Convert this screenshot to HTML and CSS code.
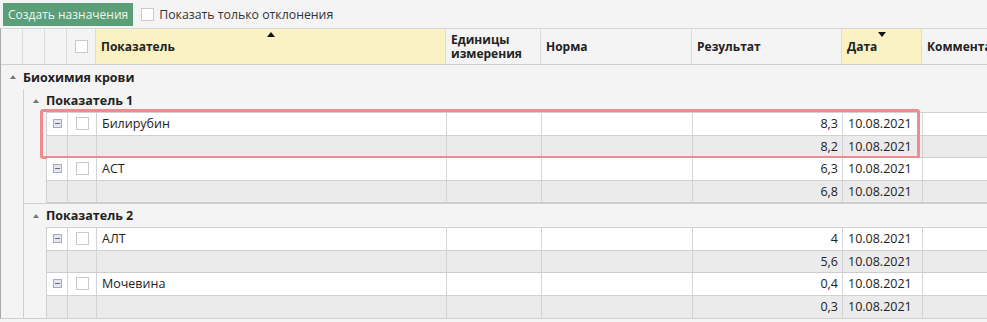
FILE: index.html
```html
<!DOCTYPE html>
<html lang="ru">
<head>
    <meta charset="UTF-8">
    <meta name="viewport" content="width=device-width, initial-scale=1.0">
    <title>Результаты анализов</title>
    <link rel="stylesheet" href="styles.css">
</head>
<body>
    <div class="toolbar">
        <button class="btn-create">Создать назначения</button>
        <label class="filter"><span class="check"></span>Показать только отклонения</label>
    </div>

    <div class="grid">
        <div class="grid-head">
            <div class="hcell c-ind"></div>
            <div class="hcell c-ind"></div>
            <div class="hcell c-ind"></div>
            <div class="hcell c-chk"><span class="check"></span></div>
            <div class="hcell c-name sorted">Показатель<span class="sort up"></span></div>
            <div class="hcell c-unit">Единицы<br>измерения</div>
            <div class="hcell c-norm">Норма</div>
            <div class="hcell c-res">Результат</div>
            <div class="hcell c-date sorted">Дата<span class="sort down"></span></div>
            <div class="hcell c-comm">Комментарий</div>
        </div>

        <div class="group">
            <div class="group-row top"><span class="caret"></span>Биохимия крови</div>
            <div class="group-body">

                <div class="group sub">
                    <div class="group-row"><span class="caret"></span>Показатель 1</div>
                    <div class="group-body">
                        <div class="pair highlight">
                            <div class="row">
                                <div class="cell c-exp"><span class="minus"></span></div>
                                <div class="cell c-chk"><span class="check"></span></div>
                                <div class="cell c-name">Билирубин</div>
                                <div class="cell c-unit"></div>
                                <div class="cell c-norm"></div>
                                <div class="cell c-res">8,3</div>
                                <div class="cell c-date">10.08.2021</div>
                                <div class="cell c-comm"></div>
                            </div>
                            <div class="row prev">
                                <div class="cell c-exp"></div>
                                <div class="cell c-chk"></div>
                                <div class="cell c-name"></div>
                                <div class="cell c-unit"></div>
                                <div class="cell c-norm"></div>
                                <div class="cell c-res">8,2</div>
                                <div class="cell c-date">10.08.2021</div>
                                <div class="cell c-comm"></div>
                            </div>
                        </div>
                        <div class="pair">
                            <div class="row">
                                <div class="cell c-exp"><span class="minus"></span></div>
                                <div class="cell c-chk"><span class="check"></span></div>
                                <div class="cell c-name">АСТ</div>
                                <div class="cell c-unit"></div>
                                <div class="cell c-norm"></div>
                                <div class="cell c-res">6,3</div>
                                <div class="cell c-date">10.08.2021</div>
                                <div class="cell c-comm"></div>
                            </div>
                            <div class="row prev">
                                <div class="cell c-exp"></div>
                                <div class="cell c-chk"></div>
                                <div class="cell c-name"></div>
                                <div class="cell c-unit"></div>
                                <div class="cell c-norm"></div>
                                <div class="cell c-res">6,8</div>
                                <div class="cell c-date">10.08.2021</div>
                                <div class="cell c-comm"></div>
                            </div>
                        </div>
                    </div>
                </div>

                <div class="group sub">
                    <div class="group-row"><span class="caret"></span>Показатель 2</div>
                    <div class="group-body">
                        <div class="pair">
                            <div class="row">
                                <div class="cell c-exp"><span class="minus"></span></div>
                                <div class="cell c-chk"><span class="check"></span></div>
                                <div class="cell c-name">АЛТ</div>
                                <div class="cell c-unit"></div>
                                <div class="cell c-norm"></div>
                                <div class="cell c-res">4</div>
                                <div class="cell c-date">10.08.2021</div>
                                <div class="cell c-comm"></div>
                            </div>
                            <div class="row prev">
                                <div class="cell c-exp"></div>
                                <div class="cell c-chk"></div>
                                <div class="cell c-name"></div>
                                <div class="cell c-unit"></div>
                                <div class="cell c-norm"></div>
                                <div class="cell c-res">5,6</div>
                                <div class="cell c-date">10.08.2021</div>
                                <div class="cell c-comm"></div>
                            </div>
                        </div>
                        <div class="pair">
                            <div class="row">
                                <div class="cell c-exp"><span class="minus"></span></div>
                                <div class="cell c-chk"><span class="check"></span></div>
                                <div class="cell c-name">Мочевина</div>
                                <div class="cell c-unit"></div>
                                <div class="cell c-norm"></div>
                                <div class="cell c-res">0,4</div>
                                <div class="cell c-date">10.08.2021</div>
                                <div class="cell c-comm"></div>
                            </div>
                            <div class="row prev">
                                <div class="cell c-exp"></div>
                                <div class="cell c-chk"></div>
                                <div class="cell c-name"></div>
                                <div class="cell c-unit"></div>
                                <div class="cell c-norm"></div>
                                <div class="cell c-res">0,3</div>
                                <div class="cell c-date">10.08.2021</div>
                                <div class="cell c-comm"></div>
                            </div>
                        </div>
                    </div>
                </div>

            </div>
        </div>
    </div>
</body>
</html>
```

FILE: styles.css
```css
body {
    margin: 0;
    width: 987px;
    height: 322px;
    overflow: hidden;
    font-family: "Open Sans", "Noto Sans", sans-serif;
    font-size: 12px;
    color: #222;
    background-color: #f4f4f4;
}
.toolbar {
    display: flex;
    align-items: center;
    gap: 8px;
    height: 28px;
    padding-left: 3px;
    box-sizing: border-box;
}
.btn-create {
    height: 23px;
    padding: 0 5px;
    font-family: inherit;
    font-size: 12px;
    color: #eef7f1;
    background-color: #5c9e78;
    border: none;
    border-radius: 0;
}
.filter {
    display: flex;
    align-items: center;
    gap: 5px;
    font-size: 12.3px;
    color: #333;
}
.check {
    display: inline-block;
    width: 11px;
    height: 11px;
    background-color: #fff;
    border: 1px solid #c9c9c9;
}

/* grid */
.grid {
    width: 1080px;
    border-top: 1px solid #d6d6d6;
    border-left: 1px solid #a9a9a9;
    border-bottom: 1px solid #d0d0d0;
}
.grid-head {
    display: flex;
    height: 36px;
    border-bottom: 1px solid #d0d0d0;
    box-sizing: border-box;
    font-weight: bold;
}
.hcell {
    position: relative;
    display: flex;
    align-items: center;
    padding-left: 5px;
    box-sizing: border-box;
    border-right: 1px solid #dcdcdc;
    line-height: 14px;
}
.hcell.c-ind {
    width: 22px;
    padding: 0;
}
.hcell.c-chk {
    justify-content: center;
    padding: 0;
}
.hcell.sorted {
    background-color: #fbf2c4;
}
.sort {
    position: absolute;
    top: 3px;
    left: 50%;
    margin-left: -4px;
    width: 0;
    height: 0;
    border-left: 4px solid transparent;
    border-right: 4px solid transparent;
}
.sort.up {
    border-bottom: 5px solid #111;
}
.sort.down {
    border-top: 5px solid #111;
}

.c-exp { width: 21px; }
.c-chk { width: 29px; }
.c-name { width: 350px; }
.c-unit { width: 95px; }
.c-norm { width: 151px; }
.c-res { width: 150px; }
.c-date { width: 80px; }
.c-comm { flex: 1; }

.group-row {
    display: flex;
    align-items: center;
    height: 23px;
    font-weight: bold;
    font-size: 12.5px;
}
.group-row.top {
    height: 24px;
}
.caret {
    width: 0;
    height: 0;
    margin: 0 7px 0 9px;
    border-left: 3px solid transparent;
    border-right: 3px solid transparent;
    border-bottom: 4px solid #777;
}
.group-body {
    margin-left: 22px;
    border-left: 1px solid #d0d0d0;
}
.group.sub + .group.sub {
    border-top: 1px solid #d0d0d0;
}

.pair {
    position: relative;
}
.highlight::after {
    content: "";
    position: absolute;
    left: -7px;
    top: -3px;
    width: 874px;
    height: 44px;
    border: 3px solid #ee8b8f;
    border-radius: 3px;
}
.row {
    display: flex;
    height: 22.5px;
    box-sizing: border-box;
    background-color: #fff;
    border-bottom: 1px solid #d0d0d4;
}
.row.prev {
    background-color: #ebebeb;
    border-bottom-color: #cdcdd1;
}
.group.sub .pair:first-child .row:first-child {
    border-top: 1px solid #d0d0d4;
    height: 23.5px;
}
.group.sub:last-child .pair:last-child .row:last-child {
    border-bottom: none;
}
.cell {
    display: flex;
    align-items: center;
    padding: 0 5px;
    box-sizing: border-box;
    border-right: 1px solid #d4d4d8;
    font-size: 12.5px;
    white-space: nowrap;
}
.cell.c-exp,
.cell.c-chk {
    justify-content: center;
    padding: 0;
}
.cell.c-res {
    justify-content: flex-end;
    padding-right: 4px;
}
.minus {
    position: relative;
    width: 7px;
    height: 7px;
    border: 1px solid #a7adbd;
    background-color: #e4e7ee;
}
.minus::after {
    content: "";
    position: absolute;
    left: 1px;
    top: 3px;
    width: 5px;
    height: 1px;
    background-color: #5d6685;
}
```
